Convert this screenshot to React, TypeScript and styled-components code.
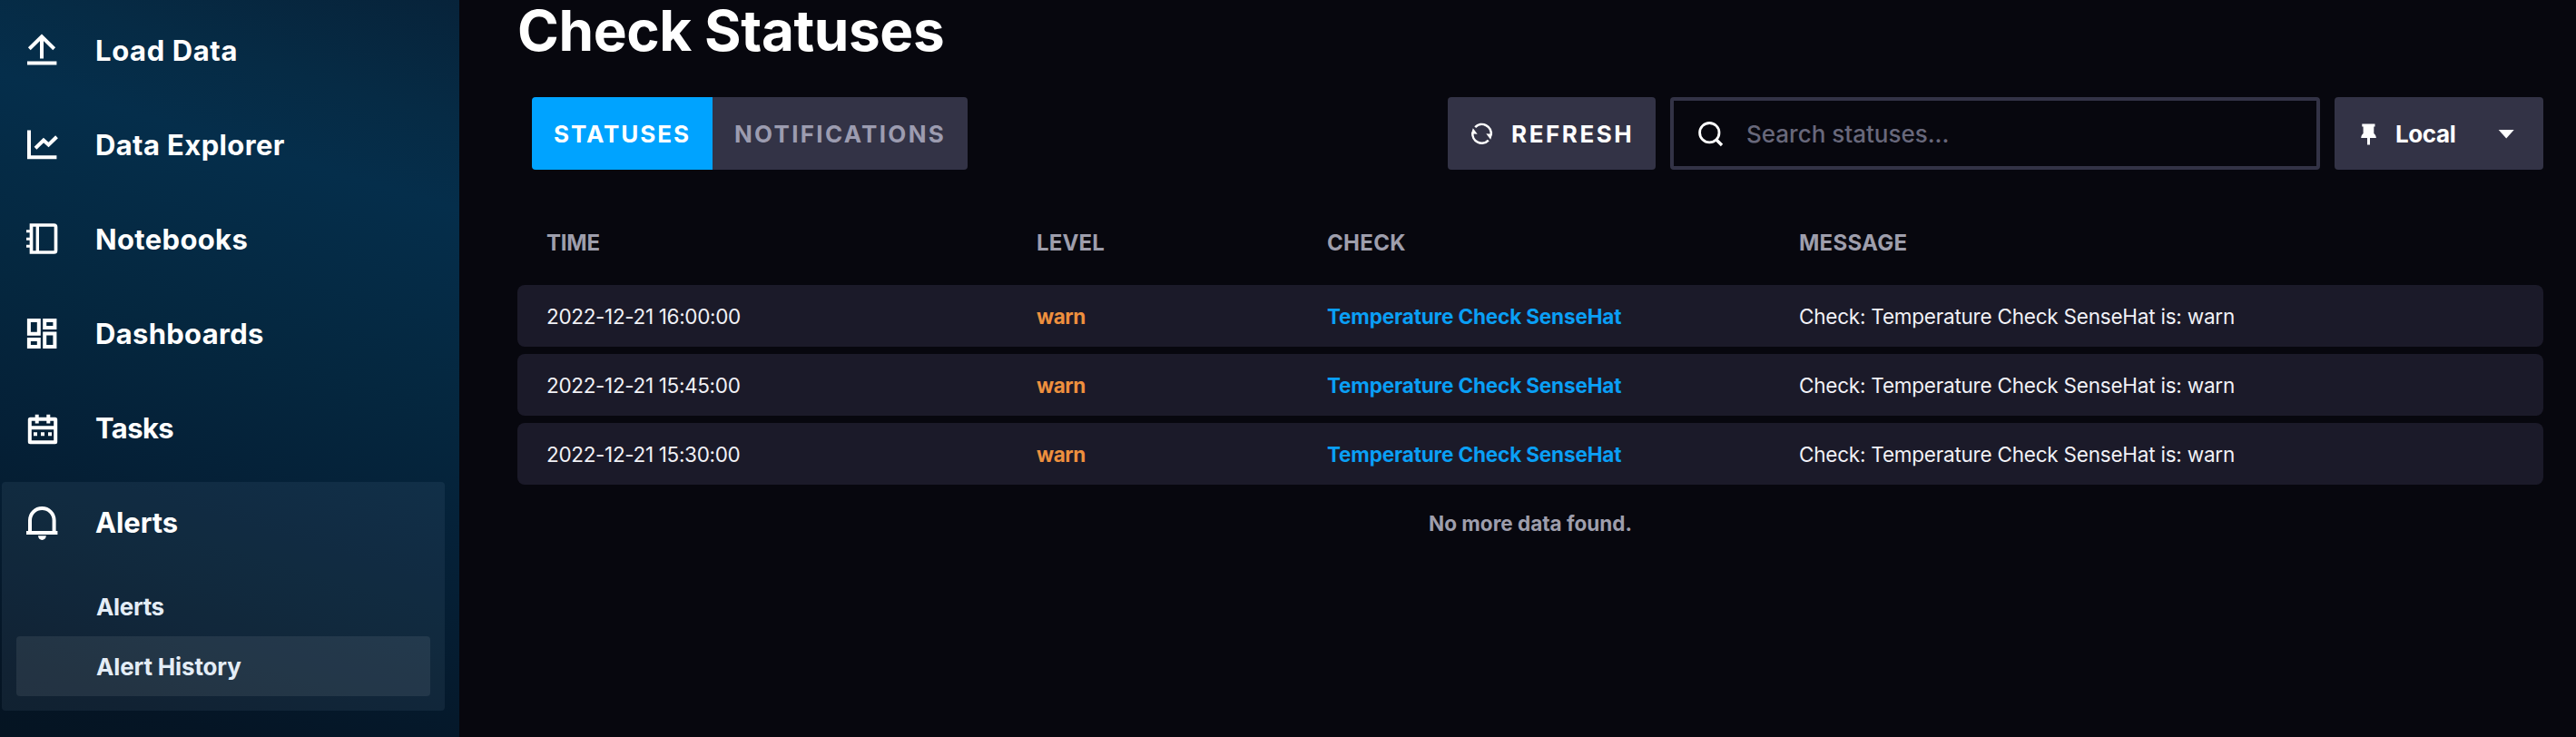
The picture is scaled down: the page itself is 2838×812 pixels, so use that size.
import React from "react";
import styled, { createGlobalStyle } from "styled-components";

const GlobalStyle = createGlobalStyle`
  * { box-sizing: border-box; }
  body { margin: 0; background: #07070e; }
`;

const Page = styled.div`
  display: flex;
  width: 100%;
  height: 812px;
  overflow: hidden;
  background: #07070e;
  color: #ffffff;
  font-family: Inter, "Liberation Sans", sans-serif;
  white-space: nowrap;
`;

const Text = styled.span<{ $tracking?: number }>`
  letter-spacing: ${({ $tracking = 0 }) => $tracking}px;
`;

/* ---------- sidebar ---------- */

const Sidebar = styled.nav`
  display: flex;
  flex: none;
  flex-direction: column;
  gap: 16px;
  width: 506px;
  padding: 11px 16px 0 2px;
  background: linear-gradient(
    196.5deg,
    #07233a 0%,
    #062b45 14%,
    #052e4b 24%,
    #05273f 47%,
    #052138 62%,
    #051c30 76%,
    #051525 92%,
    #051422 100%
  );
`;

const NavGroup = styled.div<{ $active?: boolean }>`
  flex: none;
  border-radius: 4px;
  background: ${({ $active }) => ($active ? "rgba(200, 230, 255, 0.065)" : "transparent")};
  padding-bottom: ${({ $active }) => ($active ? 16 : 0)}px;
`;

const NavItem = styled.a`
  display: flex;
  align-items: center;
  gap: 39px;
  height: 88px;
  padding-left: 24px;
  color: #ffffff;
  font-size: 31px;
  font-weight: 700;
  line-height: 42px;
`;

const NavLabel = styled(Text)`
  padding-top: 2px;
`;

const NavIcon = styled.svg`
  flex: none;
  width: 40px;
  height: 40px;
  fill: none;
  stroke: currentColor;
  stroke-width: 4;
`;

const SubMenu = styled.div`
  margin: 16px 16px 0;
`;

const SubItem = styled.a<{ $selected?: boolean }>`
  display: flex;
  align-items: center;
  height: 66px;
  padding: 1px 0 0 88px;
  border-radius: 4px;
  background: ${({ $selected }) => ($selected ? "rgba(255, 255, 255, 0.08)" : "transparent")};
  color: #e4edf6;
  font-size: 26px;
  font-weight: 700;
  line-height: 36px;
`;

/* ---------- main ---------- */

const Main = styled.main`
  flex: 1;
  min-width: 0;
  padding: 0 36px 0 64px;
`;

const Title = styled.h1`
  margin: 0;
  height: 67px;
  font-size: 62px;
  font-weight: 700;
  line-height: 67px;
`;

const Toolbar = styled.div`
  display: flex;
  gap: 16px;
  height: 80px;
  margin-top: 40px;
  padding-left: 16px;
`;

const Tabs = styled.div`
  display: flex;
  margin-right: auto;
  border-radius: 4px;
  overflow: hidden;
`;

const Tab = styled.button<{ $selected?: boolean }>`
  display: flex;
  align-items: center;
  width: ${({ $selected }) => ($selected ? 199 : 281)}px;
  padding: 1px 0 0 24px;
  border: 0;
  background: ${({ $selected }) => ($selected ? "#00a3ff" : "#333346")};
  color: ${({ $selected }) => ($selected ? "#ffffff" : "#9c9cb0")};
  font: 700 26px/36px Inter, "Liberation Sans", sans-serif;
`;

const RefreshButton = styled.button`
  display: flex;
  align-items: center;
  gap: 20px;
  width: 229px;
  padding: 1px 0 0 25px;
  border: 0;
  border-radius: 4px;
  background: #333346;
  color: #ffffff;
  font: 700 26px/36px Inter, "Liberation Sans", sans-serif;
`;

const SearchBox = styled.div`
  display: flex;
  align-items: center;
  gap: 24px;
  width: 716px;
  padding: 1px 0 0 26px;
  border: 4px solid #333346;
  border-radius: 4px;
  color: #68687b;
  font-size: 26px;
  font-weight: 500;
  line-height: 36px;
`;

const ZoneButton = styled.button`
  display: flex;
  align-items: center;
  width: 230px;
  padding: 1px 32px 0 28px;
  border: 0;
  border-radius: 4px;
  background: #333346;
  color: #ffffff;
  font: 700 26px/36px Inter, "Liberation Sans", sans-serif;
`;

const ZoneName = styled(Text)`
  flex: 1;
  padding-left: 21px;
  text-align: left;
`;

const Glyph = styled.svg`
  display: block;
  flex: none;
  color: #ffffff;
`;

const Table = styled.div`
  display: flex;
  flex-direction: column;
  gap: 8px;
  margin-top: 41px;
`;

const Row = styled.div`
  display: grid;
  grid-template-columns: 540px 320px 520px 1fr;
  align-items: center;
  height: 68px;
  padding: 2px 0 0 32px;
  border-radius: 8px;
  background: #1b1a29;
  color: #f1f1f6;
  font-size: 22.5px;
  line-height: 32px;
`;

const HeaderRow = styled(Row)`
  height: 78px;
  padding-top: 1px;
  background: transparent;
  color: #9e9eac;
  font-size: 24px;
  font-weight: 700;
`;

const Level = styled(Text)`
  color: #ee903e;
  font-weight: 700;
`;

const CheckLink = styled(Text)`
  color: #0a9ff5;
  font-weight: 700;
`;

const Footnote = styled.p`
  margin: 27px 0 0;
  color: #9e9eac;
  font-size: 22.5px;
  font-weight: 700;
  line-height: 32px;
  text-align: center;
`;

const icons = {
  load: (
    <NavIcon viewBox="0 0 40 40">
      <path d="M6.3 18.7 20 5.4l13.7 13.3M20 6v23.5M4 34.6h32.4" />
    </NavIcon>
  ),
  explorer: (
    <NavIcon viewBox="0 0 40 40">
      <path d="M6 4.5v29.8h30.4M13 24.2l9-8.7 5.5 5 9-8.8" />
    </NavIcon>
  ),
  notebook: (
    <NavIcon viewBox="0 0 40 40">
      <path strokeWidth="3.7" d="M8.5 5H33.5Q35.5 5 35.5 7V33Q35.5 35 33.5 35H8.5Z" />
      <path strokeWidth="3.4" d="M15.3 5v30" />
      <path strokeWidth="3" d="M3 11.7h5M3 20.2h5M3 28.3h5" />
    </NavIcon>
  ),
  dashboards: (
    <NavIcon viewBox="0 0 40 40">
      <path d="M5.9 6.1h10.9v14.7H5.9zM23.2 6.1h11.2v8H23.2zM5.900 27h10.9v7.900H5.900zM23.2 20.6h11.2v14.3H23.2z" />
    </NavIcon>
  ),
  tasks: (
    <NavIcon viewBox="0 0 40 40">
      <rect x="6.8" y="10.8" width="28.4" height="25.4" rx="0.5" />
      <path d="M6 20.2h30M14.7 5.7v9.8M27.3 5.7v9.8M11 27.3h4M19 27.3h4M27 27.3h4" />
    </NavIcon>
  ),
  alerts: (
    <NavIcon viewBox="0 0 40 40">
      <path d="M3 32h34.4M7 32V18.2a13.3 13.3 0 0 1 26.6 0V32" />
      <path fill="currentColor" stroke="none" d="M16 35.3h8.8a4.4 4.6 0 0 1-8.8 0z" />
    </NavIcon>
  ),
};

const navItems = [
  { label: "Load Data", icon: icons.load, tracking: 0.6 },
  { label: "Data Explorer", icon: icons.explorer, tracking: 0.37 },
  { label: "Notebooks", icon: icons.notebook, tracking: 0.34 },
  { label: "Dashboards", icon: icons.dashboards, tracking: 0.3 },
  { label: "Tasks", icon: icons.tasks, tracking: -0.6 },
];

const times = ["2022-12-21 16:00:00", "2022-12-21 15:45:00", "2022-12-21 15:30:00"];

export default function App() {
  return (
    <Page>
      <GlobalStyle />
      <Sidebar>
        {navItems.map(({ label, icon, tracking }) => (
          <NavGroup key={label}>
            <NavItem>
              {icon}
              <NavLabel $tracking={tracking}>{label}</NavLabel>
            </NavItem>
          </NavGroup>
        ))}
        <NavGroup $active>
          <NavItem>
            {icons.alerts}
            <NavLabel $tracking={-0.1}>Alerts</NavLabel>
          </NavItem>
          <SubMenu>
            <SubItem>
              <Text $tracking={-0.35}>Alerts</Text>
            </SubItem>
            <SubItem $selected>
              <Text $tracking={-0.15}>Alert History</Text>
            </SubItem>
          </SubMenu>
        </NavGroup>
      </Sidebar>

      <Main>
        <Title>
          <Text $tracking={-0.4}>Check Statuses</Text>
        </Title>
        <Toolbar>
          <Tabs>
            <Tab $selected>
              <Text $tracking={1.95}>STATUSES</Text>
            </Tab>
            <Tab>
              <Text $tracking={2.28}>NOTIFICATIONS</Text>
            </Tab>
          </Tabs>
          <RefreshButton>
            <Glyph width="25" height="25" viewBox="0 0 25 25">
              <path
                fill="none"
                stroke="currentColor"
                strokeWidth="2.6"
                d="M5.2 5.1A10.2 10.2 0 0 1 22.6 14M19.8 19.6A10.2 10.2 0 0 1 2.4 11"
              />
              <path fill="currentColor" d="M17.3 12.2l6.7 0.6-1.800 6zM7.700 12.800L1 12.200l1.800-6z" />
            </Glyph>
            <Text $tracking={2.55}>REFRESH</Text>
          </RefreshButton>
          <SearchBox>
            <Glyph width="30" height="30" viewBox="0 0 30 30">
              <g fill="none" stroke="currentColor" strokeWidth="2.8">
                <circle cx="13.3" cy="13.2" r="10.7" />
                <path strokeWidth="3.4" d="M20.5 20.5l6.5 6.5" />
              </g>
            </Glyph>
            <Text>Search statuses...</Text>
          </SearchBox>
          <ZoneButton>
            <Glyph width="18" height="24" viewBox="0 0 18 24">
              <path
                fill="currentColor"
                d="M2.3 0.5h14.2v3h-1.2v7.5c1.5 1.2 2.3 2.5 2.6 5H11v7.5H8V16H1.2c0.2-2.5 1-3.8 2.4-5V3.5H2.3z"
              />
            </Glyph>
            <ZoneName $tracking={-0.4}>Local</ZoneName>
            <Glyph width="18" height="12" viewBox="0 0 18 12">
              <path fill="currentColor" d="M0.7 1h17L9.2 10.4z" />
            </Glyph>
          </ZoneButton>
        </Toolbar>

        <Table>
          <HeaderRow>
            <Text $tracking={-0.2}>TIME</Text>
            <Text $tracking={0.15}>LEVEL</Text>
            <Text $tracking={0.3}>CHECK</Text>
            <Text $tracking={0.25}>MESSAGE</Text>
          </HeaderRow>
          {times.map((time) => (
            <Row key={time}>
              <Text $tracking={-0.33}>{time}</Text>
              <Level $tracking={-0.4}>warn</Level>
              <CheckLink $tracking={-0.15}>Temperature Check SenseHat</CheckLink>
              <Text $tracking={-0.22}>Check: Temperature Check SenseHat is: warn</Text>
            </Row>
          ))}
        </Table>
        <Footnote>No more data found.</Footnote>
      </Main>
    </Page>
  );
}
